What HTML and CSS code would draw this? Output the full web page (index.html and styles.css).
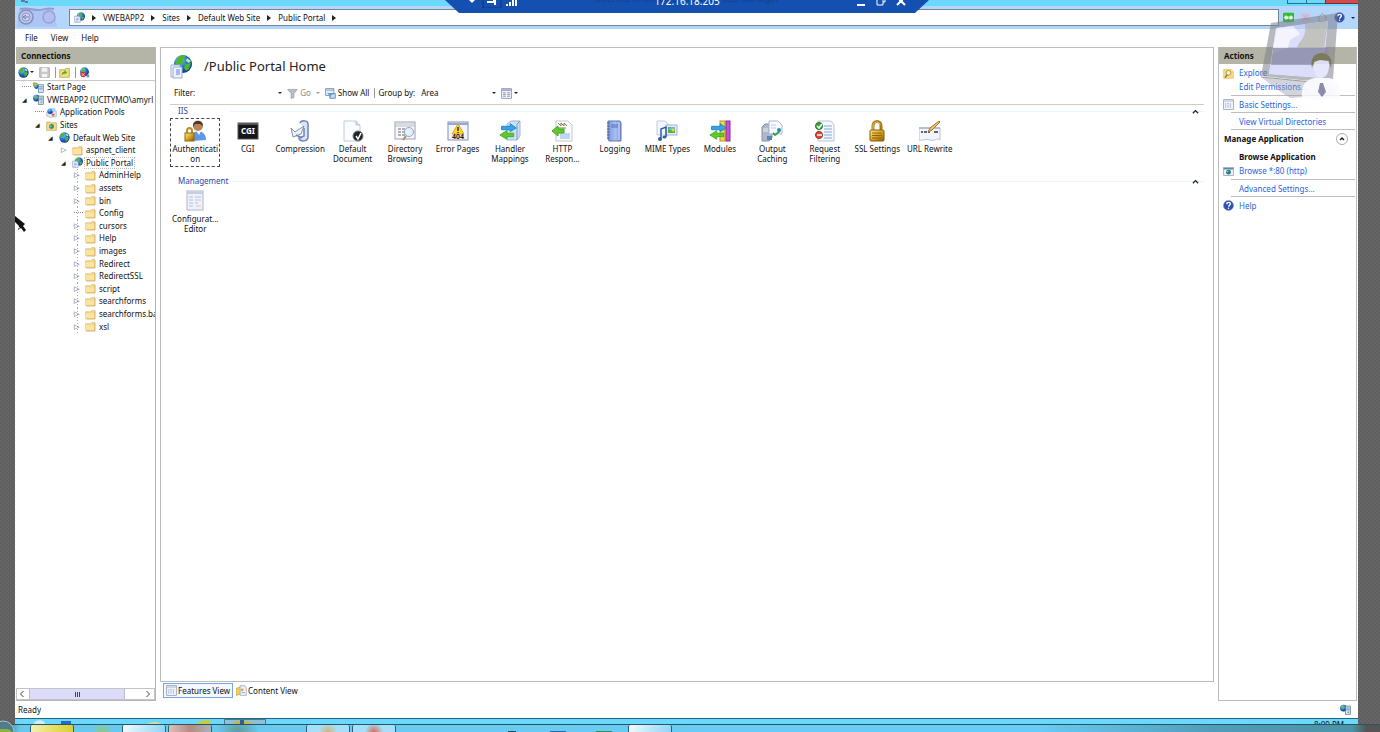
FILE: index.html
```html
<!DOCTYPE html>
<html lang="en">
<head>
    <meta charset="UTF-8">
    <meta name="viewport" content="width=device-width, initial-scale=1.0">
    <title>Internet Information Services (IIS) Manager</title>
    <link rel="stylesheet" href="styles.css">
</head>
<body>
    <!-- Shared icons -->
    <svg class="sprite" aria-hidden="true">
        <defs>
            <radialGradient id="sea" cx="35%" cy="30%" r="75%"><stop offset="0" stop-color="#8fd4ff"/><stop offset=".5" stop-color="#2271d8"/><stop offset="1" stop-color="#0b2f8a"/></radialGradient>
            <linearGradient id="gold" x2="1" y2="1"><stop offset="0" stop-color="#fff0a0"/><stop offset=".5" stop-color="#d9a520"/><stop offset="1" stop-color="#8a5c08"/></linearGradient>
            <linearGradient id="book" x2="1"><stop offset="0" stop-color="#7f9be0"/><stop offset=".6" stop-color="#a9c0f2"/><stop offset="1" stop-color="#6a86cc"/></linearGradient>
        </defs>
        <symbol id="i-globe" viewBox="0 0 16 16"><circle cx="8" cy="8" r="7.5" fill="url(#sea)"/><path d="M3 3c3-3 5-2 6-1L7 4l1 2-3 1-1 3-2-3zM9 8l4-1 1 2-2 4-2 1-1-3z" fill="#4fb52c"/><path d="M11 2l3 3-2 1-2-2z" fill="#c9f09a"/></symbol>
        <symbol id="i-app" viewBox="0 0 16 16"><circle cx="10" cy="6.5" r="6" fill="url(#sea)"/><path d="M6 3c2-2 4-2 6-1l-2 2 1 2-3 1zM11 7l4 0-2 4-2 0z" fill="#55b830"/><path d="M1 6h6l2 2v7H1z" fill="#f5f8ff" stroke="#8b9cc8"/><path d="M3 9h4M3 11h4M3 13h3" stroke="#7b93d0"/></symbol>
        <symbol id="i-server" viewBox="0 0 16 16"><circle cx="5" cy="6" r="4.8" fill="url(#sea)"/><path d="M2 4l4-2 1 3-3 3z" fill="#5fbe40"/><rect x="8" y="3" width="7" height="12" fill="#d8e2ee" stroke="#53708f"/><path d="M9 6h5M9 8.5h5" stroke="#3c6ea8"/><circle cx="12" cy="12" r="1" fill="#2f9c49"/></symbol>
        <symbol id="i-start" viewBox="0 0 16 16"><path d="M1 1l5 1 3 4-5 3-3-3z" fill="#e4c52c" stroke="#42862b"/><circle cx="5" cy="7" r="3" fill="url(#sea)"/><rect x="8" y="4" width="7" height="11" fill="#d8e2ee" stroke="#4682b4"/><path d="M9 7h5M9 10h5" stroke="#3c6ea8"/></symbol>
        <symbol id="i-pools" viewBox="0 0 16 16"><path d="M1 8l4-3 10 1v8l-9 1-5-2z" fill="#e3e6ef" stroke="#a3abc2"/><circle cx="6" cy="6" r="4" fill="url(#sea)"/><circle cx="11" cy="4" r="3" fill="#a5d5f0"/><path d="M10 9l3 2-3 3-2-3z" fill="#d86858"/></symbol>
        <symbol id="i-sites" viewBox="0 0 16 16"><path d="M1 3h5l1 1h8v11H1z" fill="#f6dc8c" stroke="#c6a04a"/><circle cx="8" cy="9.5" r="3.6" fill="#2b8c55"/><circle cx="7" cy="9" r="1.5" fill="#70cff0"/></symbol>
        <symbol id="i-folder" viewBox="0 0 16 16"><path d="M1 4h8l1-2h4v12H1z" fill="#f5d98b" stroke="#d9bb78"/><path d="M1 6h13v8H1z" fill="#fbe3a0"/><path d="M14.5 3v11.500H2" fill="none" stroke="#c89b4c"/></symbol>
        <symbol id="i-help" viewBox="0 0 16 16"><circle cx="8" cy="8" r="7.3" fill="#2f4fb0" stroke="#8a98c8"/><path d="M5.5 6c0-3.500 5.500-3.200 5.200-.3C10.500 7.500 8.500 7.500 8.200 9.500" fill="none" stroke="#fff" stroke-width="2"/><circle cx="8" cy="12" r="1.2" fill="#fff"/></symbol>
        <symbol id="i-page" viewBox="0 0 16 16"><rect x="1" y="1" width="14" height="14" fill="#f3f6fd" stroke="#8291ad"/><path d="M1.5 3h13" stroke="#c0cbe2" stroke-width="2"/><path d="M4 6v7M6 6.500h3M6 9h3M6 11.500h3M11 6v7" stroke="#9aa7c2"/></symbol>
        <symbol id="i-lock" viewBox="0 0 22 22"><path d="M7 11V6c0-6 8-6 8 0v5" fill="none" stroke="#a87a14" stroke-width="3"/><path d="M7 10V6c0-5 7-5 7-1" fill="none" stroke="#f0d070"/><rect x="4" y="10" width="14" height="11" rx="1" fill="url(#gold)" stroke="#8a5c08"/><path d="M6 13h10M6 15.500h10M6 18h10" stroke="#8e6615"/></symbol>
        <symbol id="i-arrows" viewBox="0 0 22 22"><path d="M3 5h10V2l7 5-7 4V9H3z" fill="#35a5e8" stroke="#1b7fc5"/><path d="M17 13H9v-3l-8 5 8 5v-3h8z" fill="#62c92c" stroke="#3fa824"/></symbol>
    </svg>

    <div class="window">
        <!-- Title bar -->
        <div class="titlebar">
            <svg class="title-icon" viewBox="0 0 8 4"><path d="M0 0h4v2H0zM4 1h3v2H4z" fill="#5c7fa0"/></svg>
            <div class="win-buttons">
                <button aria-label="Minimize"></button>
                <button aria-label="Maximize"></button>
                <button class="close" aria-label="Close"></button>
            </div>
        </div>

        <!-- Address bar -->
        <div class="addressbar">
            <svg class="nav-arrows" viewBox="0 0 48 23">
                <path d="M4 3h34l4 18H2z" fill="#aab8f0" opacity=".6"/><path d="M5 3c8-2 12 1 18 1s10-3 16-1" fill="none" stroke="#8e9fce" stroke-width="2"/>
                <circle cx="11" cy="11" r="7" fill="#b9c3f0" stroke="#8692ba" stroke-width="1.500"/><circle cx="11" cy="11" r="4" fill="#ccd3f5" stroke="#8f9bc6"/>
                <path d="M14 11H8m3-2l-3 2 3 2" fill="none" stroke="#76829f"/>
                <circle cx="34" cy="11" r="6" fill="#b5bdf2" stroke="#96a2d0" stroke-width="1.500"/>
            </svg>
            <nav class="crumbs">
                <svg class="i11"><use href="#i-app"/></svg>
                <i></i><a href="#">VWEBAPP2</a>
                <i></i><a href="#">Sites</a>
                <i></i><a href="#">Default Web Site</a>
                <i></i><a href="#">Public Portal</a>
                <i></i>
            </nav>
            <div class="address-tools">
                <button aria-label="Refresh"><svg class="i11" viewBox="0 0 16 16"><rect y="1" width="16" height="14" rx="2" fill="#35b835"/><path d="M1 8l4-4v2h3v4H5v2zM15 8l-4-4v2H9v4h2v2z" fill="#e9ffe5"/></svg></button>
                <button aria-label="Stop"><svg class="i11" viewBox="0 0 16 16"><rect x="1" y="1" width="14" height="14" fill="#c4c9ee"/><path d="M4 4l8 8M12 4l-8 8" stroke="#d3b3cc" stroke-width="3"/></svg></button>
                <button aria-label="Home"><svg class="i11" viewBox="0 0 16 16"><path d="M1 9l7-7 7 7M3 8v6h9V8" fill="#ccd1dd" stroke="#8b94ab"/></svg></button>
                <button class="tool-help" aria-label="Help"><svg class="i11"><use href="#i-help"/></svg></button>
                <b class="caret"></b>
            </div>
        </div>

        <!-- Menu -->
        <div class="menu">
            <button>File</button>
            <button>View</button>
            <button>Help</button>
        </div>

        <div class="content">
            <!-- Connections -->
            <aside class="connections">
                <h2>Connections</h2>
                <div class="conn-tools">
                    <button aria-label="Connect"><svg class="i11"><use href="#i-globe"/></svg><b class="caret"></b></button>
                    <button aria-label="Save"><svg class="i11" viewBox="0 0 16 16"><path d="M1 1h14v14H1z" fill="#c9c9c9" stroke="#969696"/><path d="M4 1h8v6H4zM4 10h8v5H4z" fill="#f4f4f4"/></svg></button>
                    <button class="sep" aria-label="Up"><svg class="i11" viewBox="0 0 16 16"><path d="M1 4h8l1-2h5v13H1z" fill="#f4df7d" stroke="#b89838"/><path d="M4 12c0-4 1-5 4-5V4l4 4-4 3V9" fill="#52ad36"/></svg></button>
                    <button class="sep" aria-label="Disconnect"><svg class="i11" viewBox="0 0 16 16"><circle cx="8" cy="7" r="6.500" fill="url(#sea)"/><path d="M4 3l5-1-1 5-4 2z" fill="#5fbe40"/><circle cx="6" cy="11" r="4" fill="#d62f2f"/><path d="M4 9l4 4m0-4l-4 4" stroke="#fff"/><path d="M11 11h4v4h-4z" fill="#8293a8"/></svg></button>
                </div>
                <ul class="tree">
                    <li class="lv0 leaf"><svg class="i11"><use href="#i-start"/></svg><span>Start Page</span></li>
                    <li class="lv0 open"><svg class="i11"><use href="#i-server"/></svg><span>VWEBAPP2 (UCITYMO\amyrl</span></li>
                    <li class="lv1 leaf"><svg class="i11"><use href="#i-pools"/></svg><span>Application Pools</span></li>
                    <li class="lv1 open"><svg class="i11"><use href="#i-sites"/></svg><span>Sites</span></li>
                    <li class="lv2 open"><svg class="i11"><use href="#i-globe"/></svg><span>Default Web Site</span></li>
                    <li class="lv3"><svg class="i11"><use href="#i-folder"/></svg><span>aspnet_client</span></li>
                    <li class="lv3 open"><svg class="i11"><use href="#i-app"/></svg><span class="selected">Public Portal</span></li>
                    <li class="lv4"><svg class="i11"><use href="#i-folder"/></svg><span>AdminHelp</span></li>
                    <li class="lv4"><svg class="i11"><use href="#i-folder"/></svg><span>assets</span></li>
                    <li class="lv4"><svg class="i11"><use href="#i-folder"/></svg><span>bin</span></li>
                    <li class="lv4 leaf"><svg class="i11"><use href="#i-folder"/></svg><span>Config</span></li>
                    <li class="lv4"><svg class="i11"><use href="#i-folder"/></svg><span>cursors</span></li>
                    <li class="lv4"><svg class="i11"><use href="#i-folder"/></svg><span>Help</span></li>
                    <li class="lv4"><svg class="i11"><use href="#i-folder"/></svg><span>images</span></li>
                    <li class="lv4"><svg class="i11"><use href="#i-folder"/></svg><span>Redirect</span></li>
                    <li class="lv4"><svg class="i11"><use href="#i-folder"/></svg><span>RedirectSSL</span></li>
                    <li class="lv4"><svg class="i11"><use href="#i-folder"/></svg><span>script</span></li>
                    <li class="lv4"><svg class="i11"><use href="#i-folder"/></svg><span>searchforms</span></li>
                    <li class="lv4"><svg class="i11"><use href="#i-folder"/></svg><span>searchforms.ba</span></li>
                    <li class="lv4"><svg class="i11"><use href="#i-folder"/></svg><span>xsl</span></li>
                </ul>
                <div class="scrollbar">
                    <button aria-label="Scroll left"><svg viewBox="0 0 8 8"><path d="M5 1L2 4l3 3" fill="none" stroke="#444"/></svg></button>
                    <div class="track"><div class="thumb"><i></i><i></i><i></i></div></div>
                    <button aria-label="Scroll right"><svg viewBox="0 0 8 8"><path d="M3 1l3 3-3 3" fill="none" stroke="#444"/></svg></button>
                </div>
            </aside>

            <!-- Features -->
            <main class="center">
                <div class="home">
                    <header class="home-title">
                        <svg viewBox="0 0 24 26"><circle cx="14" cy="11" r="9" fill="url(#sea)"/><path d="M8 5c4-4 7-3 9-2l-3 3 1 4-5 2-3-1zM16 11l6-1-2 6-3 2-2-3z" fill="#4fb52c"/><path d="M18 5l4 3-2 2-3-2z" fill="#c0ee8a"/><path d="M2 12h9v12H2z" fill="#fff" stroke="#9aa9c9"/><path d="M4 14h9v11H4z" fill="#eef3ff" stroke="#9aa9c9"/><path d="M7 17h4M7 19h4M7 21h4" stroke="#5d86d8"/></svg>
                        <h1>/Public Portal Home</h1>
                    </header>

                    <div class="filterbar">
                        <label for="filter">Filter:</label>
                        <input type="text" id="filter" name="filter">
                        <b class="caret"></b>
                        <button class="go" disabled><svg class="i11" viewBox="0 0 16 16"><path d="M1 2h14l-5 6v6l-4 1V8z" fill="#b9bfca" stroke="#8f97a6"/></svg>Go</button>
                        <b class="caret dim"></b>
                        <button class="show-all"><svg class="i11" viewBox="0 0 16 16"><rect x="1" y="1" width="12" height="10" fill="#e6eff9" stroke="#5b7ca8"/><path d="M1 3h12" stroke="#5b7ca8"/><path d="M7 8h8v7H7z" fill="#c9dcf0" stroke="#44719f"/><path d="M3 7l5 7 1-4 4-1z" fill="#5aa3d8"/></svg>Show All</button>
                        <div class="group">
                            <label for="group">Group by:</label>
                            <select id="group"><option>Area</option></select>
                            <b class="caret"></b>
                        </div>
                        <button class="view-mode" aria-label="View"><svg class="i11" viewBox="0 0 16 16"><rect x="1" y="1" width="14" height="14" fill="#eef0fa" stroke="#777da0"/><path d="M1 3h14" stroke="#8d94ba" stroke-width="2"/><path d="M3 7h4M3 9.500h4M3 12h4M9 7h4M9 9.500h4M9 12h4" stroke="#6d7396"/></svg><b class="caret"></b></button>
                    </div>

                    <section class="area">
                        <h3>IIS<svg class="collapse" viewBox="0 0 8 8"><path d="M1 6l3-3 3 3" fill="none" stroke="#222" stroke-width="1.500"/></svg></h3>
                        <div class="features">
                            <div class="feature focused">
                                <svg viewBox="0 0 22 22"><path d="M8 21c0-8 3-10 6-10s8 2 8 9z" fill="#5f98e8"/><path d="M12 11l3 4 2-4z" fill="#fff"/><circle cx="14" cy="6" r="5" fill="#b98458"/><path d="M9 7c-1-8 10-8 10-1l-3-2-5 0z" fill="#4e3828"/><path d="M3 14v-3c0-4 5-4 5 0v3" fill="none" stroke="#c08b1e" stroke-width="2"/><rect x="1" y="13" width="9" height="8" fill="url(#gold)" stroke="#96690c"/></svg>
                                <span>Authenticati<br>on</span>
                            </div>
                            <div class="feature">
                                <svg viewBox="0 0 22 22"><rect x="1" y="3" width="20" height="16" fill="#17171b" stroke="#555"/><path d="M1 4h20" stroke="#888"/><text x="11" y="14" class="cgi-text">CGI</text></svg>
                                <span>CGI</span>
                            </div>
                            <div class="feature">
                                <svg viewBox="0 0 22 22"><path d="M11 3c1-3 8-3 8 1v13c0 5-9 5-9 1l5-2V8" fill="#dbe5f8" stroke="#6c83bd" stroke-width="1.500"/><path d="M2 8l4 4 9-6-3 8-8 3z" fill="#eef2fb" stroke="#8390ac"/><path d="M7 15l6 3" stroke="#6c83bd" stroke-width="1.500"/></svg>
                                <span>Compression</span>
                            </div>
                            <div class="feature">
                                <svg viewBox="0 0 22 22"><path d="M2 1h12l4 4v16H2z" fill="#fbfcff" stroke="#c6cad8"/><path d="M14 1v4h4" fill="#dfe4f0" stroke="#b9bfd0"/><circle cx="16" cy="16" r="5" fill="#20242c" stroke="#777"/><path d="M14 16l2 3 3-6" fill="none" stroke="#fff" stroke-width="1.500"/></svg>
                                <span>Default<br>Document</span>
                            </div>
                            <div class="feature">
                                <svg viewBox="0 0 22 22"><rect x="1" y="2" width="20" height="17" fill="#f7f8fb" stroke="#9ba1b0"/><path d="M1 4h20M1 6h20" stroke="#b9bdc8"/><path d="M4 9h3M8 9h3M4 12h3M8 12h3M4 15h3M8 15h3" stroke="#666"/><circle cx="15" cy="12" r="4.500" fill="#e4f1fb" stroke="#8fa6c4"/><path d="M12 16l-3 4" stroke="#b78a5c" stroke-width="2"/></svg>
                                <span>Directory<br>Browsing</span>
                            </div>
                            <div class="feature">
                                <svg viewBox="0 0 22 22"><rect x="1" y="2" width="20" height="18" fill="#f3f5fc" stroke="#8390b4"/><path d="M1 4h20" stroke="#92a8d8" stroke-width="2"/><path d="M11 4l6 10H5z" fill="#ffd428" stroke="#d8a820"/><path d="M11 7v4M11 12v1" stroke="#333" stroke-width="1.500"/><text x="11" y="19" class="err-text">404</text></svg>
                                <span>Error Pages</span>
                            </div>
                            <div class="feature">
                                <svg viewBox="0 0 22 22"><path d="M8 4l4-3h9v15l-3 4H8z" fill="#cfe1f8" stroke="#9db4d4"/><path d="M18 20V4l3-3" fill="none" stroke="#7d9ac2"/><use href="#i-arrows" width="19" height="19" y="2"/></svg>
                                <span>Handler<br>Mappings</span>
                            </div>
                            <div class="feature">
                                <svg viewBox="0 0 22 22"><path d="M5 1h12l4 4v16H5z" fill="#fafcff" stroke="#c0c7d6"/><path d="M7 3l3 3V3l3 3V3l3 3M7 8h8" fill="none" stroke="#8a7d3a"/><path d="M9 14h10M9 16h10M9 18h10" stroke="#86b1dd"/><path d="M13 9H7V6l-6 5 6 5v-3h6z" fill="#62c92c" stroke="#3fa824"/></svg>
                                <span>HTTP<br>Respon...</span>
                            </div>
                            <div class="feature">
                                <svg viewBox="0 0 22 22"><path d="M4 1h12l1 2v18H5l-1-2z" fill="url(#book)" stroke="#6078b6"/><path d="M15 2v18" stroke="#dbe5fb"/><path d="M7 5h7M7 7h7" stroke="#5570b4"/><path d="M3 3h3M3 6h3M3 9h3M3 12h3M3 15h3M3 18h3" stroke="#5c6780"/></svg>
                                <span>Logging</span>
                            </div>
                            <div class="feature">
                                <svg viewBox="0 0 22 22"><path d="M1 1h8l3 3v11H1z" fill="#f3f6fc" stroke="#c3cbda"/><rect x="10" y="5" width="11" height="10" fill="#e3eefa" stroke="#9fb3d0"/><path d="M12 7h7v6h-7z" fill="#5bab3d"/><path d="M12 10l3-3h4v3z" fill="#72b4e4"/><circle cx="17" cy="10" r="1.500" fill="#e7d92e"/><path d="M5 19V9l5-2v10" fill="none" stroke="#2d5fa8" stroke-width="1.500"/><ellipse cx="4" cy="19" rx="2" ry="2" fill="#2d5fa8"/><ellipse cx="8.500" cy="17" rx="2" ry="1.500" fill="#2d5fa8"/></svg>
                                <span>MIME Types</span>
                            </div>
                            <div class="feature">
                                <svg viewBox="0 0 22 22"><rect x="11" y="1" width="5" height="20" fill="#f4d84a" stroke="#b89622"/><rect x="17" y="1" width="4" height="20" fill="#c94fd6" stroke="#8a2a98"/><use href="#i-arrows" width="19" height="19" y="2"/></svg>
                                <span>Modules</span>
                            </div>
                            <div class="feature">
                                <svg viewBox="0 0 22 22"><path d="M1 7l3-3h7v14l-3 3H1z" fill="#aeb8c9" stroke="#8792a6"/><path d="M2 9h5M2 11h5" stroke="#e9eef6"/><path d="M8 1h9l4 4v9H8z" fill="#f6f9ff" stroke="#a9b6d0"/><path d="M10 5h5M10 8h5" stroke="#b8cbe8"/><path d="M12 13l2 2 5-4" fill="none" stroke="#3ba24d" stroke-width="2"/><circle cx="18" cy="10" r="2" fill="#2b8ea8"/><path d="M6 16h5v4H6z" fill="#5c83c2"/></svg>
                                <span>Output<br>Caching</span>
                            </div>
                            <div class="feature">
                                <svg viewBox="0 0 22 22"><path d="M4 1h13l3 4v16H4z" fill="#f5f8ff" stroke="#b9c2d6"/><path d="M10 6h8M10 9h8M10 12h8M10 15h8M10 18h8" stroke="#7ca6dc"/><circle cx="5" cy="6" r="3.500" fill="#3ea43a" stroke="#227a22"/><path d="M3 6l2 2 3-4" fill="none" stroke="#fff" stroke-width="1.500"/><circle cx="5" cy="15" r="3.500" fill="#e04a38" stroke="#a82a1c"/><path d="M3 15h5" stroke="#fff" stroke-width="1.500"/></svg>
                                <span>Request<br>Filtering</span>
                            </div>
                            <div class="feature">
                                <svg><use href="#i-lock"/></svg>
                                <span>SSL Settings</span>
                            </div>
                            <div class="feature">
                                <svg viewBox="0 0 22 22"><path d="M0 8h21v12c-4-3-5 2-10 0s-7 1-11 0z" fill="#f2f5fc" stroke="#b9c0d4"/><path d="M0 8h21" stroke="#a4b2dc" stroke-width="1.500"/><path d="M2 12h2M5 12h3M9 12h2M15 12h4" stroke="#333" stroke-width="1.500"/><path d="M9 12l2-4 9-7 1 1-8 8z" fill="#f3c766" stroke="#a07428"/></svg>
                                <span>URL Rewrite</span>
                            </div>
                        </div>
                    </section>

                    <section class="area">
                        <h3>Management<svg class="collapse" viewBox="0 0 8 8"><path d="M1 6l3-3 3 3" fill="none" stroke="#222" stroke-width="1.500"/></svg></h3>
                        <div class="features">
                            <div class="feature">
                                <svg viewBox="0 0 22 22"><rect x="3" y="1" width="16" height="19" fill="#eef2fa" stroke="#aeb7c8"/><path d="M3 3h16" stroke="#c5cfe4" stroke-width="2"/><path d="M5 7h4M11 7h6M5 10h4M5 13h4M11 13h3M5 16h4" stroke="#b3c2de"/><path d="M11 10h6M12 16h5" stroke="#e0bcc0"/></svg>
                                <span>Configurat...<br>Editor</span>
                            </div>
                        </div>
                    </section>
                </div>

                <div class="view-tabs">
                    <button class="active"><svg class="i11"><use href="#i-page"/></svg>Features View</button>
                    <button><svg class="i11" viewBox="0 0 16 16"><path d="M0 5l9-3v11l-9 2z" fill="#f4cf5e" stroke="#c79a34"/><path d="M6 1h7l2 3v11H6z" fill="#eef3fb" stroke="#8d9bb8"/><circle cx="9" cy="7" r="2" fill="#e9a23c"/><path d="M8 11h5" stroke="#6f8fc8"/></svg>Content View</button>
                </div>
            </main>

            <!-- Actions -->
            <aside class="actions">
                <h2>Actions</h2>
                <ul>
                    <li><svg class="i11" viewBox="0 0 16 16"><path d="M1 2h11l3 3v10H1z" fill="#f8dc80" stroke="#dcbc68"/><circle cx="8" cy="7" r="3.500" fill="#fff4c8" stroke="#8c7440"/><path d="M6 10l-3 4" stroke="#a06c28" stroke-width="2"/></svg><a href="#">Explore</a></li>
                    <li class="ruled"><a href="#">Edit Permissions...</a></li>
                    <li class="ruled tall"><svg class="i11"><use href="#i-page"/></svg><a href="#">Basic Settings...</a></li>
                    <li class="ruled tall"><a href="#">View Virtual Directories</a></li>
                </ul>
                <h3>Manage Application
                    <button aria-label="Collapse"><svg viewBox="0 0 12 12"><circle cx="6" cy="6" r="5.500" fill="#fff" stroke="#aaa"/><path d="M4 7l2-2 2 2" fill="none" stroke="#222" stroke-width="1.500"/></svg></button>
                </h3>
                <ul>
                    <li><strong>Browse Application</strong></li>
                    <li class="ruled"><svg class="i11" viewBox="0 0 16 16"><rect x="1" y="2" width="14" height="12" fill="#eef3f8" stroke="#8795a8"/><path d="M1 4h14" stroke="#5a7db0" stroke-width="2"/><circle cx="8" cy="9" r="3.500" fill="#1f7f74"/><circle cx="7" cy="8" r="1" fill="#bff0e6"/></svg><a href="#">Browse *:80 (http)</a></li>
                    <li class="ruled tall"><a href="#">Advanced Settings...</a></li>
                    <li class="tall"><svg class="i11"><use href="#i-help"/></svg><a href="#">Help</a></li>
                </ul>
            </aside>
        </div>

        <footer class="status">
            <span>Ready</span>
            <svg class="i11"><use href="#i-server"/></svg>
        </footer>

        <!-- Server taskbar, mostly hidden -->
        <div class="server-taskbar">
            <svg class="pins" viewBox="0 0 260 5"><path d="M19 5c0-5 11-5 11 0z" fill="#cdeefa"/><rect x="46" y="2" width="10" height="3" fill="#2468c8"/><path d="M132 5q8-4 14 0z" fill="#dbdca4"/><path d="M182 5q2-4 14-4l-2 4z" fill="#c7cf38"/><path d="M209.500 5V.5h41V5" fill="#8fc0d8" stroke="#3f7d9a"/><path d="M218 5q3-4 12-3l10 3z" fill="#c7b83c"/><path d="M225 1h4v4h-4z" fill="#2c5d9c"/></svg>
            <span class="clock">8:09 PM</span>
        </div>

        <!-- Camera watermark over the right edge -->
        <svg class="watermark" viewBox="0 0 90 90">
            <path fill-rule="evenodd" d="M10 10L77 0l-5 66-12 3L0 63zM15 15L8 61l53 4 6-57z" fill="#7f7f8c" opacity=".65"/>
            <path d="M15 15l52-7-6 57-53-4z" fill="#c9c9fa" opacity=".75"/>
            <path d="M44 11l23-3-4 28-27-1c1-7 10-9 8-24z" fill="#b0b0a6" opacity=".8"/>
            <path d="M16 15l16-2 7 8-10 6-2 8-16 6z" fill="#fff" opacity=".7"/>
            <path d="M12 35h55l-2 17H10z" fill="#8484ac" opacity=".8"/>
            <path d="M0 64l60 6 14 6-5 6-40 3-12-8z" fill="#9a9aac" opacity=".5"/>
            <path d="M0 64l60 6 14 6" fill="none" stroke="#8b8b93"/>
            <path d="M41 84c-1-12 3-17 13-19h14c9 1 11 8 11 19-10 4-29 4-38 0z" fill="#fbfbff" opacity=".95"/>
            <path d="M53 52c0-11 16-11 15 0 0 8-3 13-8 13s-7-6-7-13z" fill="#e3e3fb"/>
            <path d="M51 55c-5-20 24-20 19 0l-2-7-9-1-6 2z" fill="#72724c"/>
            <path d="M59 70h3l3 9-4 5-4-5z" fill="#77779c"/>
        </svg>
    </div>

    <!-- Remote desktop bar -->
    <div class="remote-bar">
        <svg class="rb-left" viewBox="0 0 60 8"><path d="M3 0h6L6 3z" fill="#fff"/><path d="M17 0v8h18V0" fill="none" stroke="#0c3276"/><path d="M21 1h6v-1h3v5h-2V3h-7z" fill="#fff"/><path d="M41 4v2M44 2v4M47 0v6M50 0v6" stroke="#fff" stroke-width="2"/></svg>
        <span class="ghost">Internet Information Services (IIS) Manager</span>
        <span class="address">172.16.18.205</span>
        <svg class="rb-right" viewBox="0 0 54 8"><path d="M3 5h8" stroke="#fff" stroke-width="2"/><path d="M23 0v5h6V0M29 2h2V0" fill="none" stroke="#fff"/><path d="M43 5l4-4 4 4M45 0h4" fill="none" stroke="#fff" stroke-width="2"/></svg>
    </div>

    <svg class="cursor" viewBox="0 0 12 20"><path d="M0 2l10 8-2 2 3 4-2 2-3-4-3 2 1-4-4-4z" fill="#111"/><path d="M1 13l4 1" stroke="#fff"/></svg>

    <!-- Desktop taskbar -->
    <div class="taskbar">
        <svg class="orb" viewBox="0 0 16 12"><circle cx="3" cy="12" r="11" fill="#4f7d8c" stroke="#a9c4cc"/><path d="M0 9h6q4 0 6 3H0z" fill="#8db33d"/></svg>
        <div class="tasks">
            <button class="task yellow" aria-label="Task 1"></button>
            <button class="task faint" aria-label="Task 2"></button>
            <button class="task white" aria-label="Task 3"></button>
            <button class="task rose" aria-label="Task 4"></button>
            <button class="task smudge" aria-label="Task 5"></button>
            <button class="task flat" aria-label="Task 6"></button>
            <button class="task pale" aria-label="Task 7"></button>
            <button class="task pale warm" aria-label="Task 8"></button>
            <button class="task flat" aria-label="Task 9"></button>
            <button class="task flat" aria-label="Task 10"></button>
            <button class="task peek dark" aria-label="Task 11"></button>
            <button class="task peek blue" aria-label="Task 12"></button>
            <button class="task peek green" aria-label="Task 13"></button>
            <button class="task white" aria-label="Task 14"></button>
        </div>
    </div>
</body>
</html>
```
FILE: styles.css
```css
/* General Reset */
* {
    margin: 0;
    padding: 0;
    box-sizing: border-box;
}

body {
    display: flex;
    flex-direction: column;
    height: 100vh;
    overflow: hidden;
    position: relative;
    background: repeating-conic-gradient(#5f5f5f 0 25%, #666 0 50%) 0 0 / 4px 4px;
    font-family: "Noto Sans", "Open Sans", sans-serif;
    font-size: 8px;
    line-height: 10px;
    color: #111;
}

button,
input,
select {
    font: inherit;
    color: inherit;
    background: none;
    border: none;
    appearance: none;
}

a {
    color: inherit;
    text-decoration: none;
}

ul {
    list-style: none;
}

svg {
    display: block;
    flex: none;
}

.sprite {
    position: absolute;
    width: 0;
    height: 0;
}

.i11 {
    width: 11px;
    height: 11px;
}

.caret {
    border: 2px solid transparent;
    border-top-color: #222;
    border-bottom: none;
}

.caret.dim {
    border-top-color: #999;
}

/* Window */
.window {
    flex: 1;
    min-height: 0;
    margin: 0 22px 0 15px;
    display: flex;
    flex-direction: column;
    position: relative;
    background: #fff;
}

.titlebar {
    height: 6px;
    display: flex;
    justify-content: space-between;
    padding-left: 6px;
    background: #6bd8fc;
}

.title-icon {
    width: 8px;
    height: 4px;
}

.win-buttons {
    display: flex;
    height: 4px;
}

.win-buttons button {
    width: 19px;
    border: 1px solid #2c6f8f;
    border-top: none;
    border-right: none;
}

.win-buttons .close {
    width: 33px;
    background: #d4494c;
    border-color: #7a2f36;
}

/* Address bar */
.addressbar {
    height: 23px;
    display: flex;
    align-items: center;
    background: #b3d6fa;
}

.nav-arrows {
    width: 48px;
    height: 23px;
}

.crumbs {
    flex: 1;
    height: 17px;
    margin-left: 6px;
    padding: 0 4px;
    display: flex;
    align-items: center;
    gap: 7px;
    background: #fff;
    border: 1px solid #6f8798;
}

.crumbs i {
    border: 3px solid transparent;
    border-left: 4px solid #222;
    border-right: none;
}

.address-tools {
    width: 79px;
    padding-left: 4px;
    display: flex;
    align-items: center;
    gap: 6px;
}

/* Menu */
.menu {
    height: 17px;
    margin-bottom: 1px;
    padding-left: 10px;
    display: flex;
    align-items: center;
    gap: 13px;
}

/* Columns */
.content {
    flex: 1;
    min-height: 0;
    display: grid;
    grid-template-columns: 140px 1fr 139px;
    gap: 4px;
    padding: 0 1px;
}

h2 {
    height: 17px;
    padding-left: 5px;
    font-size: 8px;
    line-height: 17px;
    color: #111;
    background: #b4b5a6;
}

/* Connections */
.connections {
    display: flex;
    flex-direction: column;
    min-width: 0;
    border-right: 1px solid #b5b5b5;
    border-bottom: 1px solid #b5b5b5;
}

.conn-tools {
    height: 17px;
    padding-left: 2px;
    display: flex;
    align-items: center;
    gap: 5px;
    border-bottom: 1px solid #c8c8c8;
}

.conn-tools button {
    display: flex;
    align-items: center;
    gap: 1px;
}

.conn-tools .sep {
    padding-left: 3px;
    border-left: 1px solid #999;
}

.tree {
    height: 252px;
    display: grid;
    grid-auto-rows: 1fr;
    overflow: hidden;
}

.tree li {
    display: flex;
    align-items: center;
    gap: 2px;
    white-space: nowrap;
}

.tree li::before {
    content: "▷";
    width: 9px;
    font: 7px/10px "DejaVu Sans", sans-serif;
    color: #444;
}

.tree .open::before {
    content: "◢";
    font-size: 6px;
    color: #222;
}

.tree .leaf::before {
    content: "";
    width: 9px;
    height: 1px;
    border-top: 1px dotted #888;
}

.lv0 { padding-left: 6px; }
.lv1 { padding-left: 19px; }
.lv2 { padding-left: 32px; }
.lv3 { padding-left: 45px; }
.lv4 {
    padding-left: 58px;
    background: repeating-linear-gradient(#aaa 0 1px, transparent 1px 3px) 61px 0 / 1px 100% no-repeat;
}

.tree span {
    padding: 0 1px;
}

.tree .selected {
    outline: 1px dotted #bbb;
}

.scrollbar {
    height: 12px;
    margin-top: auto;
    display: flex;
    border: 1px solid #c4c4c4;
}

.scrollbar button {
    width: 12px;
    padding: 1px;
}

.scrollbar svg {
    width: 9px;
    height: 8px;
}

.track {
    flex: 1;
}

.thumb {
    width: 85%;
    height: 100%;
    display: flex;
    align-items: center;
    justify-content: center;
    gap: 1px;
    background: #dcdcfa;
    border: 1px solid #bcbcd8;
    border-width: 0 1px;
}

.thumb i {
    width: 1px;
    height: 5px;
    background: #444;
}

/* Center */
.center {
    display: flex;
    flex-direction: column;
    min-width: 0;
}

.home {
    flex: 1;
    border: 1px solid #bcbcbc;
}

.home-title {
    padding: 5px 0 0 8px;
    display: flex;
    align-items: center;
    gap: 11px;
}

.home-title svg {
    width: 24px;
    height: 26px;
}

h1 {
    font-size: 13px;
    line-height: 16px;
    font-weight: normal;
    color: #222;
}

.filterbar {
    height: 23px;
    margin: 3px 9px 0;
    padding: 0 4px;
    display: flex;
    align-items: center;
    gap: 5px;
    border-bottom: 1px solid #cfccc0;
}

.filterbar button {
    display: flex;
    align-items: center;
    gap: 2px;
}

.filterbar input {
    width: 73px;
}

.filterbar .go {
    color: #8a8a8a;
}

.group {
    padding-left: 3px;
    display: flex;
    align-items: center;
    gap: 6px;
    border-left: 1px solid #999;
}

.group select {
    width: 65px;
}

.area {
    padding: 0 9px;
}

.area h3 {
    height: 12px;
    padding: 0 5px 0 8px;
    display: flex;
    align-items: center;
    justify-content: space-between;
    font-size: 8px;
    font-weight: normal;
    color: #2b44a8;
    background: linear-gradient(90deg, transparent 60px, #e6f6fc 0) 0 6px / 100% 1px no-repeat;
}

.collapse {
    width: 7px;
    height: 7px;
}

.features {
    width: 787px;
    padding-top: 1px;
    display: grid;
    grid-template-columns: repeat(15, 1fr);
}

.feature {
    height: 49px;
    margin-right: 2px;
    padding-top: 1px;
    display: flex;
    flex-direction: column;
    align-items: center;
    gap: 2px;
    border: 1px solid transparent;
    text-align: center;
    white-space: nowrap;
}

.feature.focused {
    border: 1px dashed #444;
}

.feature svg {
    width: 22px;
    height: 22px;
}

.feature + .feature span {
    margin: 0 -4px;
}

.area + .area {
    padding-top: 8px;
}

.cgi-text,
.err-text {
    font-weight: bold;
    font-size: 8px;
    text-anchor: middle;
    fill: #fff;
}

.err-text {
    font-size: 7px;
    fill: #222;
}

/* View tabs */
.view-tabs {
    height: 19px;
    padding: 1px 3px 0;
    display: flex;
    align-items: flex-start;
}

.view-tabs button {
    height: 15px;
    padding: 0 2px;
    display: flex;
    align-items: center;
    gap: 1px;
    border: 1px solid transparent;
}

.view-tabs .active {
    background: #f2f8fe;
    border-color: #76a7e0;
}

/* Actions */
.actions {
    border: 1px solid #bcbcbc;
    border-top: none;
}

.actions ul {
    padding: 2px 1px 0 4px;
}

.actions li {
    height: 14px;
    padding-left: 16px;
    display: flex;
    align-items: center;
    color: #1f66e0;
}

.actions li svg {
    margin: 0 5px 0 -16px;
}

.actions .ruled {
    background: linear-gradient(#bdbdbd, #bdbdbd) 8px 100% / 100% 1px no-repeat;
}

.actions .tall {
    height: 17px;
}

.actions .ruled:not(.tall) {
    height: 16px;
    padding-bottom: 2px;
}

.actions strong {
    color: #111;
}

.actions h3 {
    height: 18px;
    padding: 0 8px 0 5px;
    display: flex;
    align-items: center;
    justify-content: space-between;
    font-size: 8px;
    color: #111;
}

.actions h3 svg {
    width: 12px;
    height: 12px;
}

/* Status */
.status {
    height: 17px;
    padding: 0 7px 0 3px;
    display: flex;
    align-items: center;
    justify-content: space-between;
}

/* Taskbars */
.server-taskbar {
    height: 6px;
    display: flex;
    justify-content: space-between;
    overflow: hidden;
    background: #6bd8fc;
    border-top: 1px solid #1f6680;
}

.server-taskbar .pins {
    width: 260px;
    height: 5px;
}

.clock {
    margin-right: 14px;
    padding-top: 1px;
    color: #111;
}

.taskbar {
    height: 8px;
    display: flex;
    position: relative;
    background: linear-gradient(90deg, #3d5964 0, #68c9ee 20px, #68cdf6 75%, #4f9db8 88%, #4b93a8 98%, #555 99%);
    border-top: 1px solid #2a5463;
}

.orb {
    position: absolute;
    left: 0;
    bottom: 0;
    width: 16px;
    height: 12px;
}

.tasks {
    display: flex;
    gap: 2px;
    margin-left: 30px;
}

.task {
    width: 44px;
    height: 7px;
    border: 1px solid #2c5f73;
    border-width: 0 1px;
    border-radius: 2px 2px 0 0;
}

.task.flat,
.task.faint,
.task.smudge,
.task.peek {
    border-color: transparent;
}

.task.yellow { background: linear-gradient(90deg, #f4f0b0, #e5dc58 60%, #d8cf3c); }
.task.white { background: linear-gradient(120deg, #f6fdff, #bfe8f8 50%, #8ad6f4); }
.task.rose { background: linear-gradient(90deg, #d8c4b8, #b58a80 50%, #a8b4bc); }
.task.faint { background: radial-gradient(circle at 60% 100%, #8fc878, transparent 10px); }
.task.smudge { background: radial-gradient(circle at 55% 100%, #5f9c9c, transparent 22px); }
.task.pale { background: radial-gradient(circle at 50% 100%, #d8b070, transparent 9px), #a4e0f8; }
.task.pale.warm { background: radial-gradient(circle at 50% 100%, #cf6f50, transparent 9px), #a4e0f8; }
.task.peek { background: linear-gradient(#2468b0, #2468b0) 50% 100% / 16px 1px no-repeat; }
.task.peek.dark { background-image: linear-gradient(#1f4f5c, #1f4f5c); background-size: 8px 1px; }
.task.peek.green { background-image: linear-gradient(#2d9050, #2d9050); }

/* Remote bar */
.remote-bar {
    position: absolute;
    top: 0;
    left: 50%;
    width: 484px;
    height: 13px;
    margin-left: -245px;
    padding: 0 21px;
    display: flex;
    justify-content: space-between;
    overflow: hidden;
    background: #1450b0;
    clip-path: polygon(0 0, 100% 0, 470px 100%, 14px 100%);
    color: #fff;
}

.rb-left {
    width: 60px;
    height: 8px;
}

.rb-right {
    width: 54px;
    height: 8px;
}

.remote-bar span {
    position: absolute;
    left: 0;
    right: 0;
    text-align: center;
    white-space: nowrap;
}

.remote-bar .ghost {
    top: -6px;
    font-size: 9px;
    color: #0d3f94;
}

.remote-bar .address {
    top: -4px;
    font-size: 10px;
}

/* Overlays */
.watermark {
    position: absolute;
    top: 13px;
    right: 7px;
    width: 90px;
    height: 90px;
    opacity: .85;
    pointer-events: none;
}

.cursor {
    position: absolute;
    top: 214px;
    left: 15px;
    width: 12px;
    height: 20px;
}
```
